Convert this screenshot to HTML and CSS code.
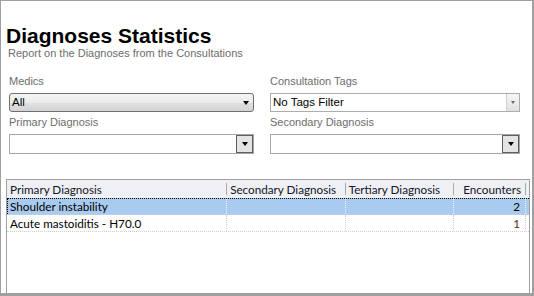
FILE: index.html
```html
<!DOCTYPE html>
<html lang="en">
<head>
    <meta charset="UTF-8">
    <title>Diagnoses Statistics</title>
    <link rel="stylesheet" href="styles.css">
</head>
<body>
    <div class="window">
        <div class="heading">
            <h1 class="title">Diagnoses Statistics</h1>
            <p class="subtitle">Report on the Diagnoses from the Consultations</p>
        </div>

        <div class="filters">
            <div class="field">
                <label class="field-label">Medics</label>
                <div class="combo combo-medics">
                    <span class="combo-text">All</span>
                    <span class="arrow arrow-dark"></span>
                </div>
            </div>
            <div class="field">
                <label class="field-label">Consultation Tags</label>
                <div class="combo combo-tags">
                    <span class="combo-text">No Tags Filter</span>
                    <span class="combo-btn btn-flat"><span class="arrow arrow-small"></span></span>
                </div>
            </div>
            <div class="field">
                <label class="field-label">Primary Diagnosis</label>
                <div class="combo combo-plain">
                    <span class="combo-text"></span>
                    <span class="combo-btn btn-sunken"><span class="arrow arrow-dark"></span></span>
                </div>
            </div>
            <div class="field">
                <label class="field-label">Secondary Diagnosis</label>
                <div class="combo combo-plain">
                    <span class="combo-text"></span>
                    <span class="combo-btn btn-sunken"><span class="arrow arrow-dark"></span></span>
                </div>
            </div>
        </div>

        <div class="grid">
            <div class="grid-row grid-head">
                <div class="cell c1">Primary Diagnosis</div>
                <div class="cell c2">Secondary Diagnosis</div>
                <div class="cell c3">Tertiary Diagnosis</div>
                <div class="cell c4 num">Encounters</div>
                <div class="cell c5"></div>
            </div>
            <div class="grid-row selected">
                <div class="cell c1">Shoulder instability</div>
                <div class="cell c2"></div>
                <div class="cell c3"></div>
                <div class="cell c4 num">2</div>
                <div class="cell c5"></div>
            </div>
            <div class="grid-row">
                <div class="cell c1">Acute mastoiditis - H70.0</div>
                <div class="cell c2"></div>
                <div class="cell c3"></div>
                <div class="cell c4 num count-low">1</div>
                <div class="cell c5"></div>
            </div>
        </div>
    </div>
</body>
</html>
```

FILE: styles.css
```css
body {
    margin: 0;
    font-family: "Liberation Sans", Arial, sans-serif;
    background: #fff;
}
.window {
    width: 534px;
    height: 296px;
    box-sizing: border-box;
    border-style: solid;
    border-color: #a0a0a0;
    border-width: 1px 2px 3px 1px;
    padding-top: 24px;
    display: flex;
    flex-direction: column;
    overflow: hidden;
    background: #fff;
}

/* heading */
.heading {
    padding-left: 5px;
}
.title {
    margin: 0;
    font-size: 21px;
    line-height: 22px;
    font-weight: bold;
    color: #000;
}
.subtitle {
    margin: 0 0 0 2px;
    font-size: 11px;
    line-height: 13px;
    color: #6d6d6d;
}

/* filter fields */
.filters {
    display: grid;
    grid-template-columns: 245px 250px;
    column-gap: 16px;
    row-gap: 3px;
    margin-top: 14px;
    padding-left: 8px;
}
.field {
    display: flex;
    flex-direction: column;
}
.field-label {
    font-size: 11px;
    line-height: 15px;
    color: #6d6d6d;
    margin-bottom: 4px;
}
.combo {
    height: 19px;
    box-sizing: border-box;
    display: flex;
    align-items: stretch;
    font-size: 11.5px;
    color: #000;
}
.combo-text {
    flex: 1;
    padding-left: 2px;
    line-height: 17px;
}
.combo-medics {
    border: 1px solid #707070;
    border-radius: 3px;
    background: linear-gradient(#f4f4f4, #ebebeb 50%, #e0e0e0 52%, #d4d4d4);
    align-items: center;
}
.combo-medics .arrow {
    margin-right: 4px;
}
.combo-tags {
    border: 1px solid #abadb3;
    background: #fff;
}
.combo-plain {
    height: 20px;
    border: 1px solid #a5a5a5;
    background: #fff;
}
.combo-btn {
    display: flex;
    align-items: center;
    justify-content: center;
}
.btn-flat {
    width: 12px;
    border-left: 1px solid #cfcfcf;
    background: linear-gradient(#f6f6f6, #ececec 50%, #e0e0e0);
}
.btn-sunken {
    width: 17px;
    box-sizing: border-box;
    border: 1px solid #5e5e5e;
    background: #e4e4e4;
}
.arrow {
    width: 0;
    height: 0;
    border-left: 3.5px solid transparent;
    border-right: 3.5px solid transparent;
    border-top: 4px solid #000;
}
.arrow-small {
    border-left-width: 2.5px;
    border-right-width: 2.5px;
    border-top: 3px solid #6a6a6a;
}

/* results grid */
.grid {
    flex: 1;
    margin: 25px 2px 0 5px;
    border: 1px solid #a0a0a0;
    border-bottom: none;
    font-family: Lato, "Liberation Sans", sans-serif;
    font-size: 11.7px;
}
.grid-row {
    display: flex;
    height: 17px;
    box-sizing: border-box;
    border-bottom: 1px dotted #d0d0d0;
    line-height: 16px;
}
.cell {
    box-sizing: border-box;
    padding-left: 3px;
    border-right: 1px dotted #d0d0d0;
    white-space: nowrap;
    overflow: hidden;
}
.c1 { width: 221px; }
.c2 { width: 119px; }
.c3 { width: 109px; }
.c4 { width: 72px; }
.c5 { flex: 1; border-right: none; }
.num {
    text-align: right;
    padding-right: 5px;
}
.count-low {
    color: #6b1a1a;
}
.grid-head {
    height: 18px;
    line-height: 18px;
    border-bottom: none;
    background: #eef0f3;
    color: #14142a;
}
.grid-head .cell {
    position: relative;
    border-right: none;
}
.grid-head .cell::after {
    content: "";
    position: absolute;
    right: 0;
    top: 3px;
    bottom: 3px;
    width: 1px;
    background: #a9a9a9;
}
.grid-head .c5::after {
    display: none;
}
.grid-row.selected {
    background: #a9cbef;
    border-top: 1px dotted #000;
    line-height: 15px;
}
.selected .cell {
    border-right-color: #eef4fb;
}
.selected .c1 {
    border-left: 1px dotted #000;
    padding-left: 2px;
}
```
